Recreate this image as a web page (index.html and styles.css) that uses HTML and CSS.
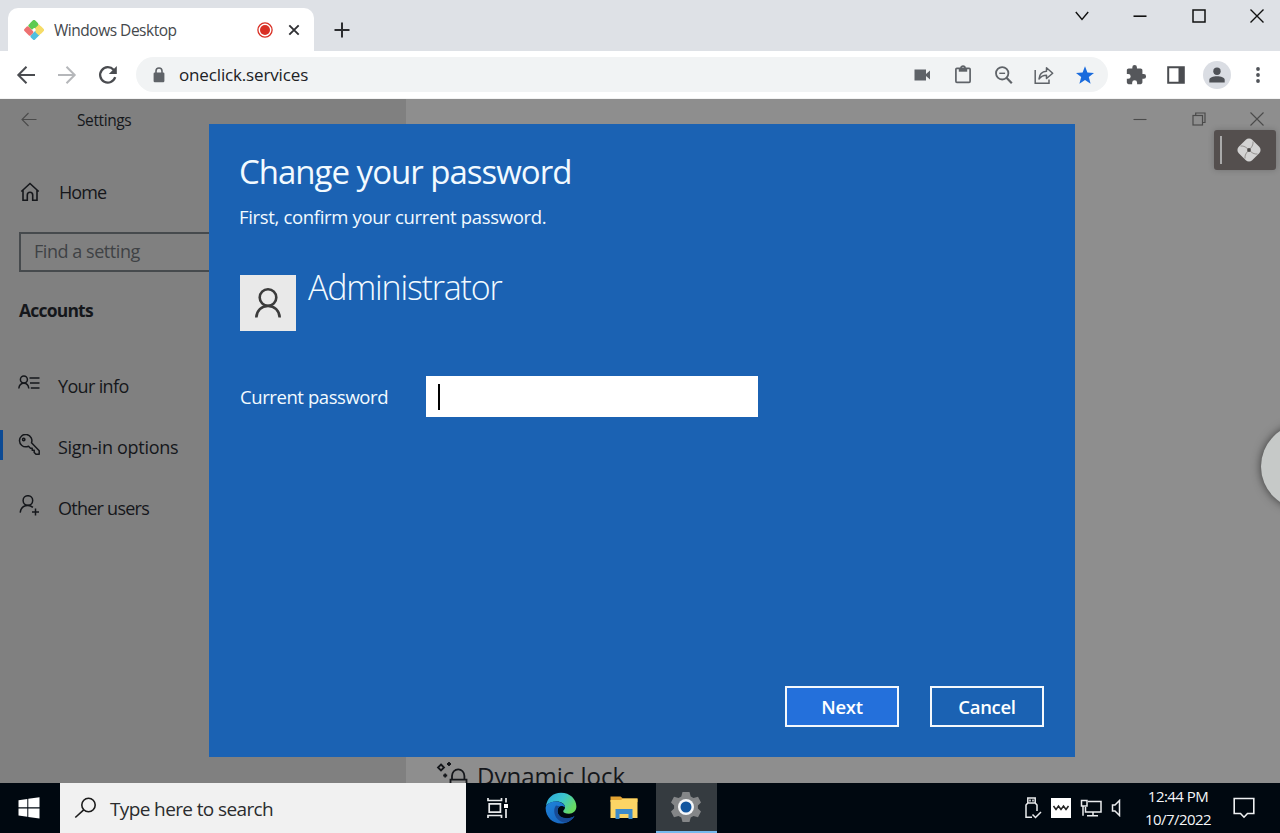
FILE: index.html
```html
<!DOCTYPE html>
<html lang="en">
<head>
    <meta charset="UTF-8">
    <meta name="viewport" content="width=device-width, initial-scale=1.0">
    <title>Windows Desktop</title>
    <link rel="stylesheet" href="styles.css">
</head>
<body>
    <header class="tabstrip">
        <div class="tab">
            <svg class="favicon" width="22" height="22" viewBox="0 0 22 22">
                <g transform="rotate(45 11 11)">
                    <rect x="3.5" y="3.5" width="6" height="9" rx="1.5" fill="#5ecb52"/>
                    <rect x="9.5" y="3.5" width="9" height="6" rx="1.5" fill="#f5dc68"/>
                    <rect x="12.5" y="9.5" width="6" height="9" rx="1.5" fill="#4fbfe0"/>
                    <rect x="3.5" y="12.5" width="9" height="6" rx="1.5" fill="#ee7171"/>
                    <rect x="3.5" y="3.5" width="7" height="6" rx="1.5" fill="#5ecb52"/>
                    <rect x="12.5" y="3.5" width="6" height="8" rx="1.5" fill="#f5dc68"/>
                </g>
            </svg>
            <span class="tab-title">Windows Desktop</span>
            <svg class="rec" width="16" height="16" viewBox="0 0 16 16">
                <circle cx="8" cy="8" r="7.1" fill="#fff" stroke="#d93025" stroke-width="1.3"/>
                <circle cx="8" cy="8" r="5" fill="#d93025"/>
            </svg>
            <svg class="tab-close" width="12" height="12" viewBox="0 0 12 12" fill="none" stroke="#303134" stroke-width="1.9">
                <path d="M1.3 1.3L10.7 10.7M10.7 1.3L1.3 10.7"/>
            </svg>
        </div>
        <svg class="new-tab" width="16" height="16" viewBox="0 0 16 16" fill="none" stroke="#2c2d30" stroke-width="2">
            <path d="M8 .5V15.5M.5 8H15.5"/>
        </svg>
        <div class="win-buttons">
            <svg width="16" height="16" viewBox="0 0 16 16" fill="none" stroke="#111" stroke-width="1.4"><path d="M1.8 4L8 11.5L14.2 4"/></svg>
            <svg width="16" height="16" viewBox="0 0 16 16" fill="none" stroke="#111" stroke-width="1.6"><path d="M1.5 8.2H14.5"/></svg>
            <svg width="16" height="16" viewBox="0 0 16 16" fill="none" stroke="#111" stroke-width="1.5"><rect x="2" y="2" width="12" height="12"/></svg>
            <svg width="16" height="16" viewBox="0 0 16 16" fill="none" stroke="#111" stroke-width="1.4"><path d="M1.5 1.5L14.5 14.5M14.5 1.5L1.5 14.5"/></svg>
        </div>
    </header>

    <nav class="toolbar">
        <div class="nav-buttons">
            <svg width="20" height="20" viewBox="0 0 20 20" fill="none" stroke="#4a4c50" stroke-width="2"><path d="M19 10H2.5M10.5 1.8L2.3 10L10.5 18.2"/></svg>
            <svg width="20" height="20" viewBox="0 0 20 20" fill="none" stroke="#b5b7ba" stroke-width="2"><path d="M1 10H17.5M9.5 1.8L17.7 10L9.5 18.2"/></svg>
            <svg width="20" height="20" viewBox="0 0 20 20" fill="none" stroke="#4a4c50" stroke-width="2.3"><path d="M17.2 12.2A7.7 7.7 0 1 1 15.6 4.8L17 6.3"/><path d="M18.8 1V9H10.8Z" fill="#4a4c50" stroke="none"/></svg>
        </div>
        <div class="address">
            <svg class="lock" width="12" height="16" viewBox="0 0 12 16">
                <rect x=".6" y="5.5" width="10.8" height="9.8" rx="1.2" fill="#5f6368"/>
                <path d="M3 6V4A3 3 0 0 1 9 4V6" fill="none" stroke="#5f6368" stroke-width="1.6"/>
            </svg>
            <span class="url">oneclick.services</span>
            <div class="address-icons">
                <svg width="20" height="20" viewBox="0 0 20 20" fill="#5f6368"><path d="M2.5 4.5H14V9L18 5.5V14.5L14 11V15.5H2.5Z"/></svg>
                <svg width="20" height="20" viewBox="0 0 20 20" fill="none" stroke="#5f6368" stroke-width="1.7"><rect x="2.9" y="3.3" width="14.2" height="14" rx="1"/><path d="M5.8 5.2H14.2" stroke-width="3"/><path d="M8 3A2 1.8 0 0 1 12 3"/></svg>
                <svg width="20" height="20" viewBox="0 0 20 20" fill="none" stroke="#5f6368" stroke-width="1.8"><circle cx="8.2" cy="8.3" r="6.2"/><path d="M12.5 12.8L17.8 18.2" stroke-width="2.2"/><path d="M5.3 8.3H11.1" stroke-width="1.4"/></svg>
                <svg width="20" height="20" viewBox="0 0 20 20" fill="none" stroke="#5f6368" stroke-width="1.5"><path d="M1.2 5V18.2H15V14.5"/><path d="M5 14C5.3 9.5 8 6.5 12.5 6.2V2.8L18.7 8.3L12.5 13.5V10.2C9 10.2 7 11.3 5 14Z" stroke-linejoin="round"/></svg>
                <svg width="20" height="20" viewBox="0 0 20 20" fill="#1a6bdd"><path d="M10 1.3L12.4 7.5L19 7.9L13.8 12L15.6 18.8L10 15L4.4 18.8L6.2 12L1 7.9L7.6 7.5Z"/></svg>
            </div>
        </div>
        <div class="toolbar-icons">
            <svg width="22" height="22" viewBox="0 0 24 24" fill="#55575b"><path d="M20.5 11H19V7c0-1.1-.9-2-2-2h-4V3.5a2.5 2.5 0 0 0-5 0V5H4c-1.1 0-2 .9-2 2v3.8h1.5a2.7 2.7 0 0 1 0 5.4H2V20c0 1.1.9 2 2 2h3.8v-1.5a2.7 2.7 0 0 1 5.4 0V22H17c1.1 0 2-.9 2-2v-4h1.5a2.5 2.5 0 0 0 0-5z"/></svg>
            <svg width="18" height="18" viewBox="0 0 18 18"><path d="M1.2 1.2H16.8V16.8H1.2Z" fill="none" stroke="#4a4c50" stroke-width="2"/><path d="M11.5 1H17V17H11.5Z" fill="#4a4c50"/></svg>
            <svg width="28" height="28" viewBox="0 0 28 28"><circle cx="14" cy="14" r="14" fill="#dadde3"/><circle cx="14" cy="10.2" r="3.7" fill="#4f5257"/><path d="M6.3 21.5V19C6.3 16.5 10 15.3 14 15.3S21.7 16.5 21.7 19V21.5Z" fill="#4f5257"/></svg>
            <svg class="kebab" width="6" height="18" viewBox="0 0 6 18" fill="#505358"><circle cx="3" cy="3" r="1.9"/><circle cx="3" cy="9" r="1.9"/><circle cx="3" cy="15" r="1.9"/></svg>
        </div>
    </nav>

    <main class="desktop">
        <aside class="sidebar">
            <div class="sidebar-title">
                <svg width="16" height="16" viewBox="0 0 16 16" fill="none" stroke="#4b4b4b" stroke-width="1.1"><path d="M15.5 7.5H1M7.5 1L1 7.5L7.5 14"/></svg>
                <span class="t-settings">Settings</span>
            </div>
            <div class="item home">
                <svg width="22" height="22" viewBox="0 0 22 22" fill="none" stroke="#15171b" stroke-width="1.6"><path d="M2.3 10.5L11 2.5L19.7 10.5M4 9V19.2H8.3V14A2.6 2.6 0 0 1 13.7 14V19.2H18V9"/></svg>
                <span class="t-home">Home</span>
            </div>
            <div class="find"><span class="t-find">Find a setting</span></div>
            <h2 class="group">Accounts</h2>
            <div class="item">
                <svg width="22" height="22" viewBox="0 0 22 22" fill="none" stroke="#15171b" stroke-width="1.5"><circle cx="5.9" cy="6.5" r="3.5"/><path d="M.8 15.5C1.2 12 3.2 10.2 5.9 10.2S10.4 12 10.8 15.5M11.5 5H21.5M12 10H21.5M12.8 15H21.5"/></svg>
                <span class="t-info">Your info</span>
            </div>
            <div class="item active">
                <svg width="22" height="22" viewBox="0 0 22 22" fill="none" stroke="#15171b" stroke-width="1.5" stroke-linejoin="round"><path d="M13.5 8.8A6.2 6.2 0 1 0 9 12.7L10.5 12.2L12.5 14.2H14.2V16.2H16.2V18.5L18 20.3H21.2V16.8Z"/><circle cx="5.7" cy="5.5" r="1.2"/></svg>
                <span class="t-signin">Sign-in options</span>
            </div>
            <div class="item">
                <svg width="22" height="22" viewBox="0 0 22 22" fill="none" stroke="#15171b" stroke-width="1.5"><circle cx="9.9" cy="5.5" r="4.8"/><path d="M2.2 17.7C2.7 13 5.9 10.4 9.9 10.4C11.9 10.4 13.6 11.2 14.9 12.4M17.5 13.5V20.5M14 17H21"/></svg>
                <span class="t-users">Other users</span>
            </div>
        </aside>
        <section class="content">
            <div class="remote-buttons">
                <svg width="16" height="16" viewBox="0 0 16 16" fill="none" stroke="#4b4b4b" stroke-width="1.1"><path d="M1.5 8.5H14.5"/></svg>
                <svg width="16" height="16" viewBox="0 0 16 16" fill="none" stroke="#4b4b4b" stroke-width="1.2"><rect x="2" y="4.5" width="9.5" height="9.5"/><path d="M4.7 4.3V2H14V11.5H11.7"/></svg>
                <svg width="16" height="16" viewBox="0 0 16 16" fill="none" stroke="#4b4b4b" stroke-width="1.1"><path d="M1.5 1.5L14.5 14.5M14.5 1.5L1.5 14.5"/></svg>
            </div>
            <div class="dynamic">
                <svg width="34" height="30" viewBox="0 0 34 30" fill="none" stroke="#15171b" stroke-width="1.8"><path d="M5 3.5L8 6.5L5 9.5L2 6.5Z"/><path d="M13 1V5M11 3H15M9.2 12.5V16.5M7.2 14.5H11.2"/><path d="M16 19V15A6.2 6.7 0 0 1 28.4 15V19M14.500 27V18.7H30.5V27"/></svg>
                <span class="t-dynamic">Dynamic lock</span>
            </div>
        </section>

        <div class="dialog">
            <h1>Change your password</h1>
            <p class="hint">First, confirm your current password.</p>
            <div class="account">
                <div class="avatar">
                    <svg width="28" height="32" viewBox="0 0 28 32" fill="none" stroke="#3b3b3b" stroke-width="2.6"><circle cx="14" cy="10.5" r="8.3"/><path d="M2.3 30.5C2.6 23.5 7.5 19 14 19S25.4 23.5 25.7 30.5"/></svg>
                </div>
                <span class="account-name">Administrator</span>
            </div>
            <div class="field">
                <label>Current password</label>
                <div class="input"><span class="caret"></span></div>
            </div>
            <div class="actions">
                <button class="btn primary"><span class="t-next">Next</span></button>
                <button class="btn"><span class="t-cancel">Cancel</span></button>
            </div>
        </div>

        <div class="oneclick">
            <span class="grip"></span>
            <svg width="28" height="28" viewBox="0 0 28 28">
                <rect x="4.5" y="4.5" width="19" height="19" rx="4.5" fill="#d3d3d3" transform="rotate(45 14 14)"/>
                <path d="M5.5 10C9 9.5 11.5 11.5 14 14S19 18.5 22.5 18M18 5.5C18.5 9 16.5 11.5 14 14S9.5 19 10 22.5" fill="none" stroke="#85827f" stroke-width=".8"/>
                <circle cx="14" cy="14" r="1.9" fill="#4a4746"/>
            </svg>
        </div>
        <div class="side-handle"></div>
    </main>

    <footer class="taskbar">
        <div class="start">
            <svg width="22" height="22" viewBox="0 0 22 22" fill="#fff"><path d="M.5 3.2L9.3 2V10.3H.5ZM10.3 1.8L21.5 .3V10.3H10.3ZM.5 11.4H9.3V19.8L.5 18.6ZM10.3 11.4H21.5V21.5L10.3 20Z"/></svg>
        </div>
        <div class="search">
            <svg width="24" height="24" viewBox="0 0 24 24" fill="none" stroke="#1c1c1c" stroke-width="1.6"><circle cx="14.5" cy="9" r="6.7"/><path d="M9.7 13.8L1.3 21.5"/></svg>
            <span class="t-search">Type here to search</span>
        </div>
        <div class="apps">
            <div class="app">
                <svg width="22" height="22" viewBox="0 0 22 22" fill="none" stroke="#e8eaec" stroke-width="1.7"><path d="M1 1V3.5H14.5V1M1 21V18.5H14.5V21M2.2 6.8H13.4V15.2H2.2ZM19 1V5.5M19 12V21"/><path d="M17 7H21V11H17Z" fill="#fff" stroke="none"/></svg>
            </div>
            <div class="app">
                <svg width="32" height="32" viewBox="0 0 32 32">
                    <defs>
                        <linearGradient id="edgeTop" x1="0" y1="0" x2="1" y2=".5"><stop offset="0" stop-color="#2aa5dc"/><stop offset=".55" stop-color="#3cc5cd"/><stop offset="1" stop-color="#67da62"/></linearGradient>
                        <linearGradient id="edgeBody" x1="0" y1="0" x2=".8" y2="1"><stop offset="0" stop-color="#1e83da"/><stop offset="1" stop-color="#1763bd"/></linearGradient>
                    </defs>
                    <path d="M1 14C2 6 8 .7 16 .7C25 .7 31.4 7 31.4 14.5C31.4 19 28 21.7 24 21.7C20.5 21.7 18.2 20.6 18.2 19.3C18.2 18.3 20 17.5 20 15.5C20 12 16.5 9.5 11.5 9.5C7 9.5 3 11 1 14Z" fill="url(#edgeTop)"/>
                    <path d="M.6 16C1 12 5.5 9.5 11 9.5C15.5 9.5 20 12 20 15.5C17 12.5 12.5 14 12.5 19C12.5 24 17.5 26.5 22 26.5C25 26.5 27.5 25.5 29.5 24C26.5 29 21.5 31.5 16 31.5C7.5 31.5 .6 25 .6 16Z" fill="url(#edgeBody)"/>
                    <path d="M11 13.5C8 17 8.5 25 15 29C17 30.2 19 30.5 21 30.5C25 29.5 28 27 29.5 24C24 28 12.5 26.5 12.5 19C12.5 17 13.2 15.2 14.5 14.2Z" fill="#174b96"/>
                </svg>
            </div>
            <div class="app">
                <svg width="28" height="26" viewBox="0 0 28 26">
                    <path d="M.5 1.5H10.5L13 3.5H27.5V7H.5Z" fill="#e3a332"/>
                    <path d="M.5 5H11L13 3.5H27.5V23H.5Z" fill="#fcd565"/>
                    <path d="M5.5 24V14H22.5V24H18.5V19H9.5V24Z" fill="#3c8bcb"/>
                </svg>
            </div>
            <div class="app app-active">
                <svg width="32" height="32" viewBox="0 0 32 32">
                    <path d="M12.5 1H19.5L20.7 5.4L23.5 7L28 5.8L31 11.5L27.9 14.5V17.5L31 20.5L28 26.2L23.5 25L20.7 26.6L19.5 31H12.5L11.3 26.6L8.5 25L4 26.2L1 20.5L4.1 17.5V14.5L1 11.5L4 5.8L8.5 7L11.3 5.4Z" fill="#848688"/>
                    <circle cx="16" cy="16" r="8" fill="#f5f7f9"/><circle cx="16" cy="16" r="5.5" fill="#12569f"/>
                </svg>
            </div>
        </div>
        <div class="tray">
            <svg width="18" height="24" viewBox="0 0 18 24" fill="none" stroke="#e9ebed" stroke-width="1.5"><path d="M3.8 7V2H11.2V7M8 21.2H2V9L3.8 7H11.2L13 9V15M8.5 18.5L11.5 21.5L17 16"/><path d="M6 3.5V5.5M9 3.5V5.5"/></svg>
            <span class="vm"><svg width="20" height="20" viewBox="0 0 20 20" fill="none" stroke="#222" stroke-width="1.5"><path d="M2.5 8L5 11.5L7.5 8L10 11.5L12.5 8L15 11.5L17.5 8"/></svg></span>
            <svg width="22" height="20" viewBox="0 0 22 20" fill="none" stroke="#e9ebed" stroke-width="1.5"><path d="M8 3.5H21V14H5.5V9M13 14V17.5M7 17.7H18M1.5 2.5H7V8H1.5ZM3 17.7V8"/></svg>
            <svg width="12" height="18" viewBox="0 0 12 18" fill="none" stroke="#e9ebed" stroke-width="1.5"><path d="M1.5 6H4L8.5 1.5V16.5L4 12H1.5Z"/></svg>
        </div>
        <div class="clock">
            <span class="t-time">12:44 PM</span>
            <span class="t-date">10/7/2022</span>
        </div>
        <svg class="notice" width="22" height="22" viewBox="0 0 22 22" fill="none" stroke="#eef0f2" stroke-width="1.6"><path d="M1.2 1.5H20.8V16.5H14.5L11 20.2L7.5 16.5H1.2Z"/></svg>
    </footer>
</body>
</html>
```

FILE: styles.css
```css
* {
    box-sizing: border-box;
}
body {
    width: 1280px;
    height: 833px;
    margin: 0;
    overflow: hidden;
    display: flex;
    flex-direction: column;
    font-family: "Open Sans", "Noto Sans", sans-serif;
    color: #15171b;
    white-space: nowrap;
}
svg {
    display: block;
    flex: none;
}
h1, h2, p {
    margin: 0;
}

/* browser chrome */
.tabstrip {
    height: 51px;
    padding-left: 8px;
    background: #dee1e6;
    display: flex;
}
.tab {
    width: 306px;
    height: 43px;
    margin-top: 8px;
    padding: 0 14px 0 15px;
    background: white;
    border-radius: 10px 10px 0 0;
    display: flex;
    align-items: center;
}
.tab-title {
    width: 203px;
    margin-left: 9px;
    font-size: 15.5px;
    letter-spacing: -0.48px;
    color: #45484c;
}
.rec {
    margin: 0 15px 0 0;
}
.new-tab {
    margin: 22px 0 0 20px;
}
.win-buttons {
    margin-left: auto;
    padding: 8px 15px 0 0;
    display: flex;
    gap: 42.5px;
}
.toolbar {
    height: 48px;
    background: white;
    display: flex;
    align-items: center;
    padding-left: 16px;
    border-bottom: 1px solid #f3f3f3;
}
.nav-buttons {
    display: flex;
    gap: 21px;
    width: 120px;
}
.address {
    width: 972px;
    height: 35px;
    border-radius: 18px;
    background: #f1f3f4;
    display: flex;
    align-items: center;
    padding: 0 13px 0 17px;
}
.url {
    margin-left: 14px;
    font-size: 17px;
    letter-spacing: -0.15px;
    color: #202124;
}
.address-icons {
    display: flex;
    gap: 20.7px;
    margin-left: auto;
}
.toolbar-icons {
    display: flex;
    align-items: center;
    gap: 20px;
    margin-left: 17px;
}
.kebab {
    margin-left: 4px;
}
.toolbar-icons svg:nth-child(3) {
    margin-left: -2px;
}

/* remote desktop */
.desktop {
    height: 684px;
    position: relative;
    display: flex;
    background: #8e8e8e;
    overflow: hidden;
}
.sidebar {
    width: 406px;
    background: #808080;
}
.sidebar-title {
    height: 42px;
    padding-left: 21px;
    display: flex;
    align-items: center;
    gap: 40px;
}
.t-settings {
    font-size: 15.5px;
    letter-spacing: -0.4px;
}
.item {
    height: 61px;
    padding-left: 18px;
    display: flex;
    align-items: center;
    gap: 18px;
    font-size: 18px;
}
.item svg {
    margin-top: -3px;
}
.home {
    height: 50px;
    margin-top: 26px;
    padding-left: 19px;
}
.home svg {
    margin-top: -1px;
}
.t-home {
    letter-spacing: -0.9px;
}
.t-info {
    letter-spacing: -0.65px;
}
.t-signin {
    letter-spacing: -0.28px;
}
.t-users {
    letter-spacing: -0.75px;
}
.find {
    height: 40px;
    margin: 15px 20px 0 19px;
    padding: 0 0 2px 13px;
    border: 2px solid #464a4d;
    display: flex;
    align-items: center;
    font-size: 18px;
    letter-spacing: -0.45px;
    color: #3f4245;
}
.group {
    height: 40px;
    margin: 18px 0 25px 19px;
    font-size: 17.5px;
    letter-spacing: -0.8px;
    font-weight: 700;
    line-height: 40px;
}
.active {
    background: linear-gradient(#0c4a94, #0c4a94) 0 14px / 3px 30px no-repeat;
}
.content {
    flex: 1;
    display: flex;
    flex-direction: column;
    justify-content: space-between;
}
.remote-buttons {
    display: flex;
    justify-content: flex-end;
    gap: 42.5px;
    padding: 12px 15px 0 0;
}
.dynamic {
    display: flex;
    gap: 7px;
    height: 22px;
    padding-left: 30px;
    font-size: 24px;
    line-height: 30px;
}

.dialog {
    position: absolute;
    left: 209px;
    top: 25px;
    width: 866px;
    height: 633px;
    padding: 24px 31px 30px 30px;
    background: #1b62b3;
    color: #f2faff;
    display: flex;
    flex-direction: column;
}
h1 {
    height: 50px;
    font-size: 33px;
    font-weight: 400;
    letter-spacing: -1px;
    line-height: 48px;
}
.hint {
    height: 77px;
    font-size: 18.5px;
    letter-spacing: -0.33px;
    line-height: 38px;
}
.account {
    display: flex;
    gap: 12px;
    margin-left: 1px;
}
.avatar {
    width: 56px;
    height: 56px;
    background: #e9e9e9;
    display: flex;
    align-items: center;
    justify-content: center;
}
.account-name {
    font-size: 34px;
    font-weight: 300;
    letter-spacing: -1.2px;
    line-height: 25px;
}
.field {
    display: flex;
    align-items: center;
    margin: 45px 0 0 1px;
}
.field label {
    width: 186px;
    font-size: 18.5px;
    letter-spacing: -0.42px;
}
.input {
    width: 332px;
    height: 41px;
    padding: 8px 12px;
    background: white;
}
.caret {
    display: block;
    width: 2px;
    height: 26px;
    background: black;
}
.actions {
    display: flex;
    justify-content: flex-end;
    gap: 31px;
    margin-top: auto;
}
.btn {
    width: 114px;
    height: 41px;
    padding: 0;
    border: 2px solid #f4f8fc;
    background: #1b62b3;
    color: white;
    font-family: inherit;
    font-size: 18.5px;
    letter-spacing: -0.3px;
    font-weight: 600;
}
.primary {
    background: #2470db;
}

.oneclick {
    position: absolute;
    left: 1214px;
    top: 31px;
    width: 62px;
    height: 40px;
    padding-left: 6px;
    border-radius: 3px;
    background: #544f4e;
    box-shadow: 0 0 6px rgba(0, 0, 0, 0.2);
    display: flex;
    align-items: center;
    gap: 13px;
}
.grip {
    width: 2px;
    height: 28px;
    background: #aaa;
}
.side-handle {
    position: absolute;
    left: 1261px;
    top: 325px;
    width: 85px;
    height: 85px;
    border-radius: 50%;
    background: #c6c9c8;
    box-shadow: 0 0 10px rgba(0, 0, 0, 0.6);
}

/* taskbar */
.taskbar {
    height: 50px;
    background: #000810;
    display: flex;
    align-items: center;
    color: #f4f6f8;
}
.start {
    width: 60px;
    padding-left: 18px;
}
.search {
    width: 406px;
    height: 50px;
    padding-left: 14px;
    background: #f1f1f1;
    color: #2a2c2e;
    display: flex;
    align-items: center;
    gap: 12px;
}
.t-search {
    padding-top: 2px;
    font-size: 19px;
    letter-spacing: -0.62px;
}
.apps {
    width: 251px;
    display: flex;
}
.app {
    width: 63.3px;
    height: 50px;
    display: flex;
    align-items: center;
    justify-content: center;
}
.app-active {
    width: 61px;
    background: #353b40;
    border-bottom: 2px solid #76b9ed;
}
.tray {
    display: flex;
    align-items: center;
    gap: 9px;
    margin-left: 307px;
}
.vm {
    background: white;
}
.clock {
    width: 80px;
    margin-left: 15px;
    display: flex;
    flex-direction: column;
    align-items: center;
    font-size: 15px;
    letter-spacing: -0.55px;
    line-height: 23px;
}
.notice {
    margin-left: 15px;
}
```
